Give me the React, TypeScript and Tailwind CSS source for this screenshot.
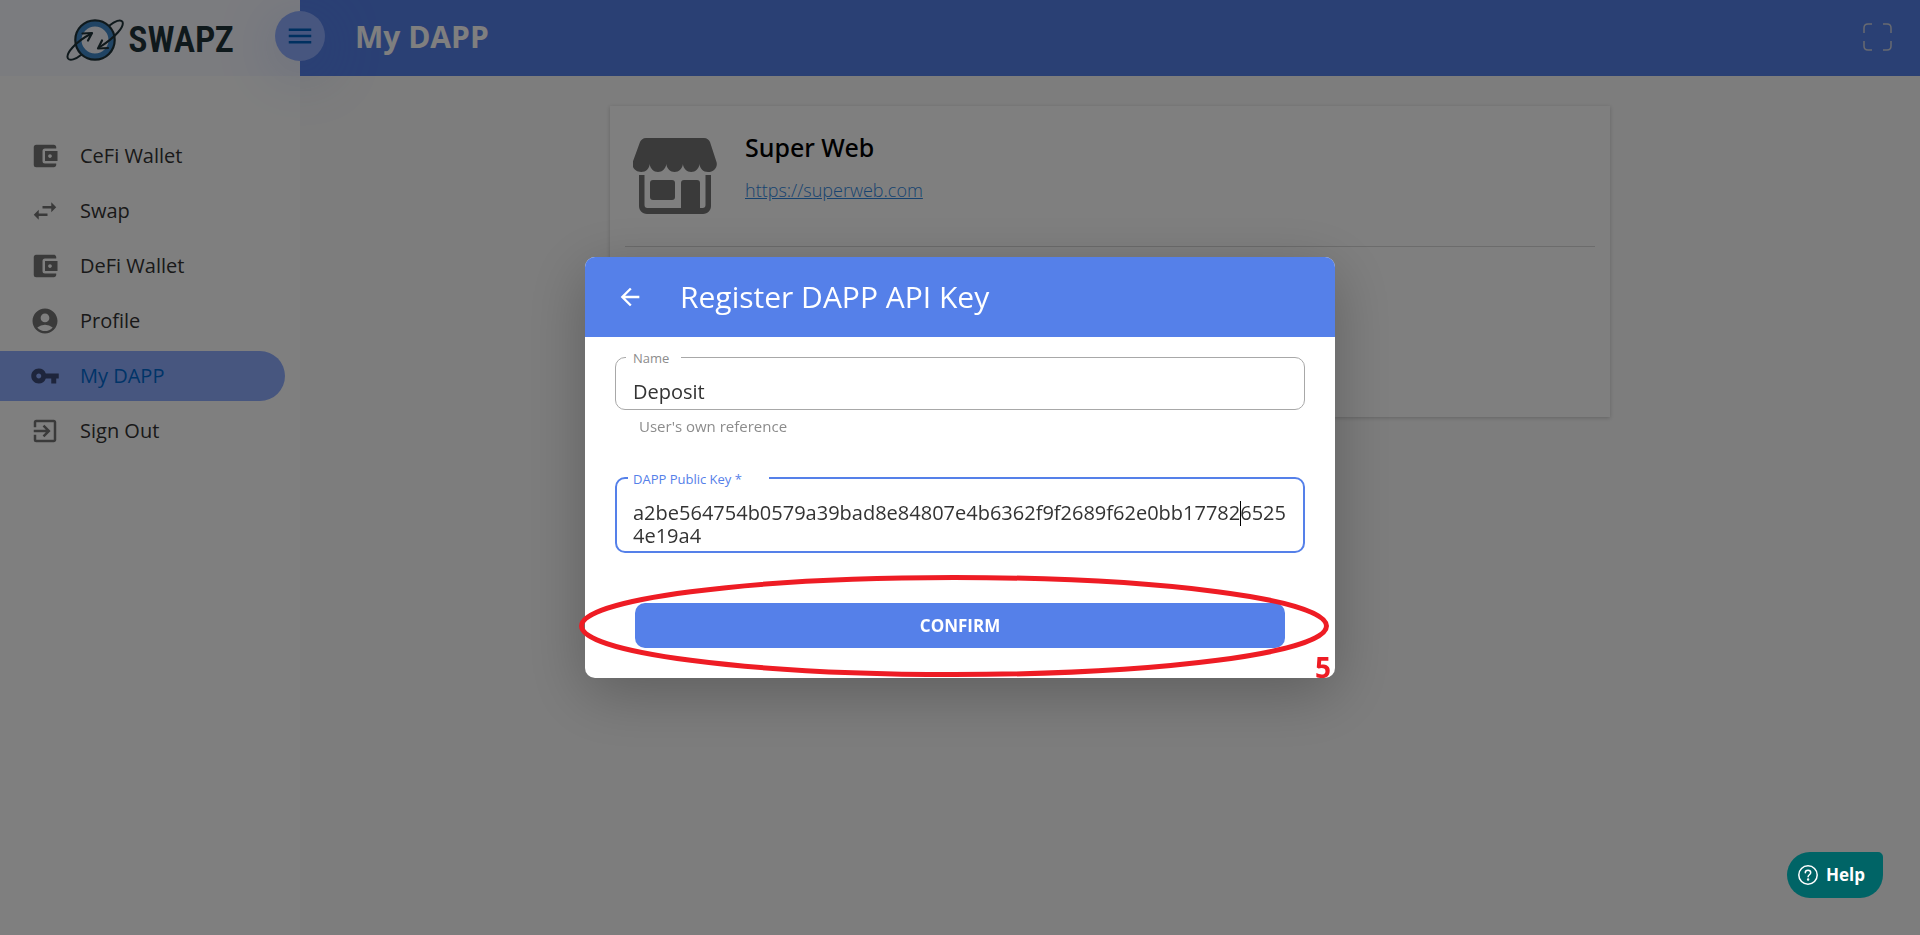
import type { ReactNode } from "react";
import {
  MdAccountBalanceWallet,
  MdAccountCircle,
  MdArrowBack,
  MdExitToApp,
  MdMenu,
  MdSwapHoriz,
  MdVpnKey,
} from "react-icons/md";

const PUBLIC_KEY =
  "a2be564754b0579a39bad8e84807e4b6362f9f2689f62e0bb1778265254e19a4";

type NavItem = { label: string; icon: ReactNode; active?: boolean };

const NAV: NavItem[] = [
  { label: "CeFi Wallet", icon: <MdAccountBalanceWallet /> },
  { label: "Swap", icon: <MdSwapHoriz /> },
  { label: "DeFi Wallet", icon: <MdAccountBalanceWallet /> },
  { label: "Profile", icon: <MdAccountCircle /> },
  { label: "My DAPP", icon: <MdVpnKey />, active: true },
  { label: "Sign Out", icon: <MdExitToApp /> },
];

function Logo() {
  return (
    <div className="flex items-center gap-1 text-[#1f3338]">
      <svg width="58" height="44" viewBox="0 0 58 44" fill="none" stroke="currentColor" strokeLinecap="round" strokeLinejoin="round">
        <circle cx="29" cy="22" r="16.5" stroke="#4088c8" strokeWidth="6" />
        <circle cx="29" cy="22" r="19.700" strokeWidth="2.200" />
        <path d="M43.500 7.500C49 3 54.500 1 56.300 3.500 59 8 50 19 33 29.500" strokeWidth="2" />
        <path d="M15 37C9.500 41.500 4 43 2 40.500-.8 36 9 24 25.500 15.500" strokeWidth="2" />
        <path d="M16.500 15.500l9.500-.5-4 7.500" strokeWidth="2.200" />
        <path d="M42 30l-10 .5 4-8" strokeWidth="2.200" />
      </svg>
      <span className="font-['Roboto_Condensed','Liberation_Sans_Narrow','Liberation_Sans',sans-serif] text-[36px] font-semibold leading-none">
        SWAPZ
      </span>
    </div>
  );
}

function StoreIcon() {
  return (
    <svg width="84" height="76" viewBox="0 0 84 76" fill="#757575" aria-hidden="true">
      <path d="M13 0h58c3 0 5 2 6 4l6.500 20c1.500 5-2.500 10-8.500 10-5 0-8-3.500-8.500-8-.5 4.500-4 8-8.300 8s-7.800-3.500-8.300-8c-.5 4.500-4 8-8.300 8s-7.800-3.500-8.300-8c-.5 4.500-4 8-8.300 8s-7.800-3.500-8.300-8c-.5 4.500-3.500 8-8.500 8-6 0-10-5-8.500-10L7 4c1-2 3-4 6-4z" />
      <path d="M6 37h5.500v30c0 2 1 3 3 3H48V45c0-2 1-3 3-3h13c2 0 3 1 3 3v25h2.500c2 0 3-1 3-3V37H78v31c0 4-3 8-8 8H14c-5 0-8-4-8-8z" />
      <rect x="17" y="42" width="25" height="20" rx="3" />
    </svg>
  );
}

export default function App() {
  return (
    <div className="flex min-h-screen bg-[#fafafa] font-['Open_Sans',sans-serif]">
      <aside className="flex w-[300px] shrink-0 flex-col bg-white">
        <div className="flex h-[76px] items-center justify-center bg-[#f7f8ff] pt-1">
          <Logo />
        </div>
        <nav className="flex flex-col gap-[5px] pr-[15px] pt-[55px]">
          {NAV.map((item) => (
            <a
              key={item.label}
              href="#"
              className={
                item.active
                  ? "flex h-[50px] items-center gap-5 rounded-r-full bg-[#8fadff] pl-[30px] text-xl text-[#0068d0]"
                  : "flex h-[50px] items-center gap-5 pl-[30px] text-xl text-[#333333]"
              }
            >
              <span className={item.active ? "text-[30px] text-[#3c4b78]" : "text-[30px] text-[#757575]"}>
                {item.icon}
              </span>
              {item.label}
            </a>
          ))}
        </nav>
      </aside>

      <div className="flex min-w-0 grow flex-col">
        <header className="relative flex h-[76px] items-center justify-between bg-[#5580e9] pb-[3px] pl-[55px] pr-7">
          <button
            type="button"
            aria-label="Toggle menu"
            className="absolute -left-[25px] top-[11px] grid size-[50px] place-items-center rounded-full bg-[#8fadff] text-[30px] text-[#0060c0] shadow-[0_10px_60px_rgba(85,128,233,0.3)]"
          >
            <MdMenu />
          </button>
          <h1 className="text-[30px] font-bold text-white">My DAPP</h1>
          <button type="button" aria-label="Full screen">
            <svg width="29" height="28" viewBox="0 0 29 28" fill="none" stroke="#d0d4e0" strokeWidth="1.500">
              <path d="M1 10V5c0-2.500 1.500-4 4-4h4M20 1h4c2.500 0 4 1.500 4 4v5M28 18v5c0 2.500-1.500 4-4 4h-4M9 27H5c-2.500 0-4-1.500-4-4v-5" />
            </svg>
          </button>
        </header>

        <main className="flex flex-col items-center px-6 pt-[30px]">
          <section className="h-[311px] w-full max-w-[1000px] bg-white px-[15px] shadow-[0_1px_4px_rgba(0,0,0,0.2)]">
            <div className="flex h-[141px] gap-7 border-b border-[#d8d8d8] pl-2 pt-8">
              <StoreIcon />
              <div className="flex flex-col gap-[14px]">
                <h2 className="-mt-2 font-['Noto_Sans','Open_Sans',sans-serif] text-[25px] font-medium leading-[34px] text-black">
                  Super Web
                </h2>
                <a href="#" className="text-lg font-[350] leading-6 text-[#2f86e0] underline">
                  https://superweb.com
                </a>
              </div>
            </div>
          </section>
        </main>
      </div>

      <div className="fixed inset-0 grid place-items-center bg-black/50">
        <div
          role="dialog"
          aria-labelledby="dialog-title"
          className="relative w-full max-w-[750px] rounded-[10px] bg-white shadow-[0_15px_60px_rgba(0,0,0,0.25)]"
        >
          <div className="flex h-20 items-center gap-9 rounded-t-[10px] bg-[#5580e9] pl-[31px] text-white">
            <button type="button" aria-label="Back" className="text-[28px]">
              <MdArrowBack />
            </button>
            <h2 id="dialog-title" className="pb-[2px] text-[30px]">
              Register DAPP API Key
            </h2>
          </div>

          <form className="flex flex-col px-[30px] pb-[30px] pt-5">
            <div className="relative">
              <label htmlFor="name" className="absolute -top-2 left-[11px] bg-white pl-[7px] pr-3 text-[13px] leading-[18px] text-[#8c8c8c]">
                Name
              </label>
              <input
                id="name"
                defaultValue="Deposit"
                className="block h-[53px] w-full rounded-[10px] border border-[#a8a8a8] px-[17px] pt-4 text-xl text-[#333333] outline-none"
              />
            </div>
            <p className="pl-6 pt-[6px] text-[15px] leading-5 text-[#8c8c8c]">User's own reference</p>

            <div className="relative mt-[41px]">
              <label htmlFor="public-key" className="absolute -top-[7px] left-[13px] bg-white pl-[5px] pr-[27px] text-[13px] leading-[18px] text-[#5580e9]">
                DAPP Public Key *
              </label>
              <textarea
                id="public-key"
                defaultValue={PUBLIC_KEY}
                className="block h-[76px] w-full resize-none overflow-hidden break-all rounded-[10px] border-2 border-[#5580e9] px-4 pt-[22px] text-xl leading-[23px] text-[#333333] outline-none"
              />
              <span className="absolute right-16 top-6 h-[25px] w-px bg-black" />
            </div>

            <button type="submit" className="mx-5 mt-[50px] h-[45px] rounded-[10px] bg-[#5580e9] text-[17px] font-bold text-white">
              CONFIRM
            </button>
          </form>

          <svg className="pointer-events-none absolute -left-[6px] bottom-px" width="750" height="102" viewBox="0 0 750 102" fill="none">
            <ellipse cx="375" cy="51" rx="372.500" ry="48.500" stroke="#ee1c24" strokeWidth="5" />
          </svg>
          <span className="absolute bottom-0 right-1 text-[28px] font-bold leading-[22px] text-[#ee1c24]">5</span>
        </div>
      </div>

      <button
        type="button"
        className="fixed bottom-[37px] right-[37px] flex h-[46px] w-24 items-center gap-2 rounded-[23px] rounded-tr-[5px] bg-[#006466] pl-[11px] text-[17px] font-bold text-white"
      >
        <svg width="20" height="20" viewBox="0 0 20 20" fill="none" stroke="currentColor" strokeWidth="1.500" strokeLinecap="round">
          <circle cx="10" cy="10" r="9.200" />
          <path d="M7.300 7.800C7.300 4.500 12.700 4.500 12.700 7.800c0 2-2.600 1.900-2.600 4" />
          <circle cx="10.100" cy="14.400" r=".5" fill="currentColor" />
        </svg>
        Help
      </button>
    </div>
  );
}
